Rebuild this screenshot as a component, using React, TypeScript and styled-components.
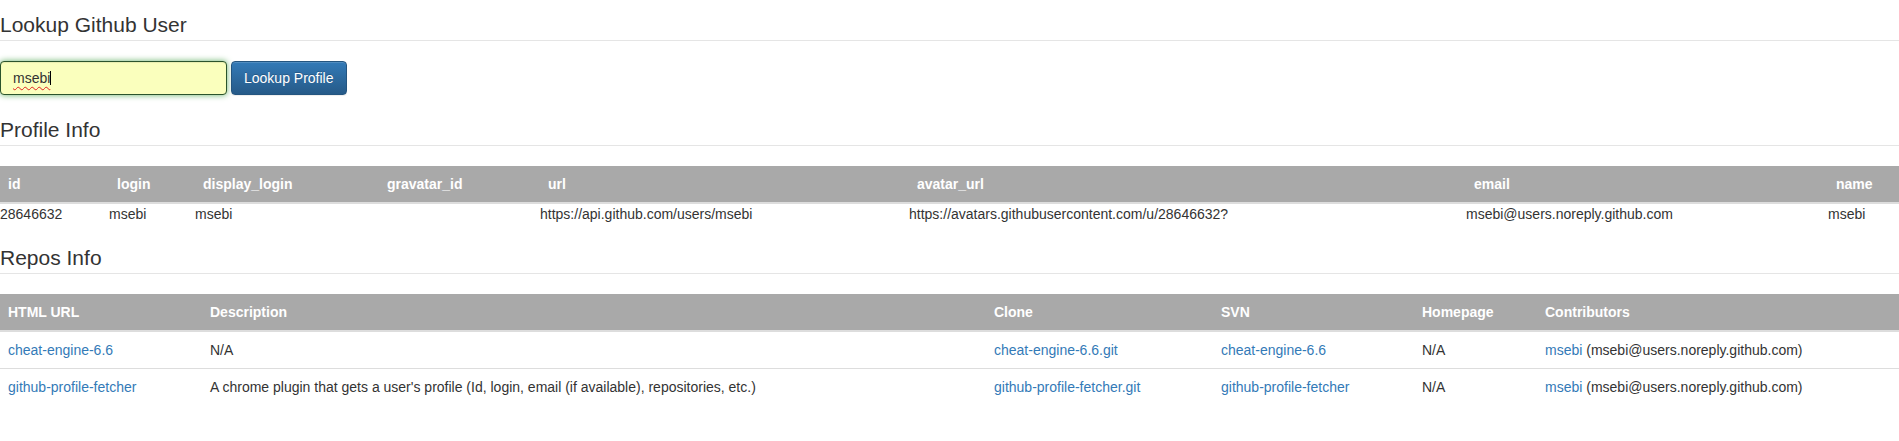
import React from "react";
import styled, { createGlobalStyle } from "styled-components";

const GlobalStyle = createGlobalStyle`
  html, body {
    margin: 0;
    padding: 0;
    background: #fff;
  }
  body {
    font-family: "Liberation Sans", Arial, Helvetica, sans-serif;
    font-size: 14px;
    line-height: 20px;
    color: #333;
  }
  * { box-sizing: border-box; }
`;

const Page = styled.main`
  display: flex;
  flex-direction: column;
  padding-top: 13px;
`;

const SectionTitle = styled.h3<{ $gap: number }>`
  margin: ${(p) => p.$gap}px 0 20px;
  padding: 0 0 4px;
  font-size: 21px;
  line-height: 23px;
  font-weight: normal;
  color: #333;
  border-bottom: 1px solid #e5e5e5;
`;

const SearchForm = styled.form`
  display: flex;
  align-items: center;
  gap: 4px;
  margin: 0;
`;

const Field = styled.div`
  display: flex;
  align-items: center;
  width: 227px;
  height: 34px;
  padding: 6px 12px;
  border: 1px solid #2b542c;
  border-radius: 4px;
  background: rgb(250, 255, 189);
  box-shadow: inset 0 1px 1px rgba(0, 0, 0, 0.075), 0 0 6px #67b168;
  color: #333;
  font-size: 14px;
  line-height: 20px;
`;

const Typed = styled.span`
  text-decoration: underline wavy #e02020;
  text-decoration-thickness: 1px;
  text-underline-offset: 3px;
  text-decoration-skip-ink: none;
`;

const Caret = styled.span`
  display: inline-block;
  width: 1px;
  height: 14px;
  margin-left: 0px;
  background: #000;
`;

const PrimaryButton = styled.button`
  height: 34px;
  padding: 6px 12px;
  border: 1px solid #245580;
  border-radius: 4px;
  background-image: linear-gradient(to bottom, #337ab7 0, #265a88 100%);
  color: #fff;
  font-family: inherit;
  font-size: 14px;
  line-height: 20px;
  text-shadow: 0 -1px 0 rgba(0, 0, 0, 0.2);
  box-shadow: inset 0 1px 0 rgba(255, 255, 255, 0.15), 0 1px 1px rgba(0, 0, 0, 0.075);
  cursor: pointer;
`;

const Table = styled.table`
  width: 100%;
  border-collapse: collapse;
  border-spacing: 0;
  table-layout: fixed;
`;

const Col = styled.col<{ $w: number }>`
  width: ${(p) => p.$w}px;
`;

const HeadCell = styled.th`
  padding: 8px;
  text-align: left;
  vertical-align: bottom;
  font-weight: bold;
  line-height: 20px;
  color: #fff;
  background: #a9a9a9;
  border-bottom: 2px solid #ddd;
  white-space: nowrap;
`;

const Cell = styled.td<{ $pad: number; $ruled?: boolean }>`
  padding: ${(p) => p.$pad}px;
  vertical-align: top;
  line-height: 20px;
  white-space: nowrap;
  border-top: ${(p) => (p.$ruled ? "1px solid #ddd" : "0")};
`;

const Link = styled.a`
  color: #337ab7;
  text-decoration: none;
`;

const profileCols = [
  { key: "id", w: 109 },
  { key: "login", w: 86 },
  { key: "display_login", w: 184 },
  { key: "gravatar_id", w: 161 },
  { key: "url", w: 369 },
  { key: "avatar_url", w: 557 },
  { key: "email", w: 362 },
  { key: "name", w: 71 },
];

const profile: Record<string, string> = {
  id: "28646632",
  login: "msebi",
  display_login: "msebi",
  gravatar_id: "",
  url: "https://api.github.com/users/msebi",
  avatar_url: "https://avatars.githubusercontent.com/u/28646632?",
  email: "msebi@users.noreply.github.com",
  name: "msebi",
};

const repoCols = [
  { label: "HTML URL", w: 202 },
  { label: "Description", w: 784 },
  { label: "Clone", w: 227 },
  { label: "SVN", w: 201 },
  { label: "Homepage", w: 123 },
  { label: "Contributors", w: 362 },
];

const repos = [
  {
    name: "cheat-engine-6.6",
    description: "N/A",
  },
  {
    name: "github-profile-fetcher",
    description:
      "A chrome plugin that gets a user's profile (Id, login, email (if available), repositories, etc.)",
  },
];

export default function App() {
  return (
    <>
      <GlobalStyle />
      <Page>
        <SectionTitle $gap={0}>Lookup Github User</SectionTitle>
        <SearchForm onSubmit={(e) => e.preventDefault()}>
          <Field role="textbox" aria-label="GitHub username">
            <Typed>msebi</Typed>
            <Caret />
          </Field>
          <PrimaryButton type="submit">Lookup Profile</PrimaryButton>
        </SearchForm>

        <SectionTitle $gap={23}>Profile Info</SectionTitle>
        <Table>
          <colgroup>
            {profileCols.map((c) => (
              <Col key={c.key} $w={c.w} />
            ))}
          </colgroup>
          <thead>
            <tr>
              {profileCols.map((c) => (
                <HeadCell key={c.key}>{c.key}</HeadCell>
              ))}
            </tr>
          </thead>
          <tbody>
            <tr>
              {profileCols.map((c) => (
                <Cell key={c.key} $pad={0}>
                  {profile[c.key]}
                </Cell>
              ))}
            </tr>
          </tbody>
        </Table>

        <SectionTitle $gap={22}>Repos Info</SectionTitle>
        <Table>
          <colgroup>
            {repoCols.map((c) => (
              <Col key={c.label} $w={c.w} />
            ))}
          </colgroup>
          <thead>
            <tr>
              {repoCols.map((c) => (
                <HeadCell key={c.label}>{c.label}</HeadCell>
              ))}
            </tr>
          </thead>
          <tbody>
            {repos.map((r, i) => (
              <tr key={r.name}>
                <Cell $pad={8} $ruled={i > 0}>
                  <Link href="#">{r.name}</Link>
                </Cell>
                <Cell $pad={8} $ruled={i > 0}>
                  {r.description}
                </Cell>
                <Cell $pad={8} $ruled={i > 0}>
                  <Link href="#">{r.name}.git</Link>
                </Cell>
                <Cell $pad={8} $ruled={i > 0}>
                  <Link href="#">{r.name}</Link>
                </Cell>
                <Cell $pad={8} $ruled={i > 0}>
                  N/A
                </Cell>
                <Cell $pad={8} $ruled={i > 0}>
                  <Link href="#">msebi</Link> (msebi@users.noreply.github.com)
                </Cell>
              </tr>
            ))}
          </tbody>
        </Table>
      </Page>
    </>
  );
}
